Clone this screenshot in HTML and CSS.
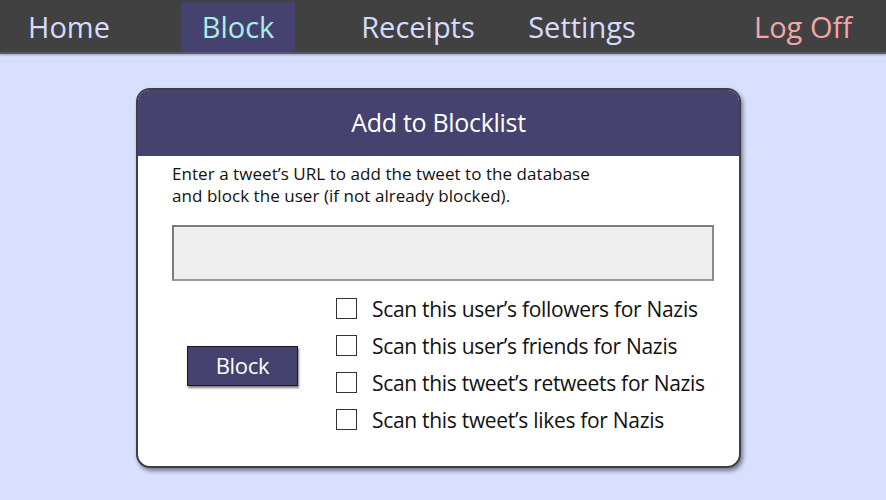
FILE: index.html
```html
<!DOCTYPE html>
<html>
<head>
<meta charset="utf-8">
<link rel="stylesheet" href="styles.css">
</head>
<body>
<nav class="nav">
  <a class="nav-link nav-home">Home</a>
  <a class="nav-link nav-block active">Block</a>
  <a class="nav-link nav-receipts">Receipts</a>
  <a class="nav-link nav-settings">Settings</a>
  <a class="nav-link nav-logoff">Log Off</a>
</nav>
<main class="main">
  <section class="card">
    <header class="card-head">Add to Blocklist</header>
    <div class="card-body">
      <p class="intro">Enter a tweet’s URL to add the tweet to the database<br>and block the user (if not already blocked).</p>
      <div class="url-input"></div>
      <div class="actions">
        <div class="btn-wrap"><button class="btn">Block</button></div>
        <ul class="checks">
          <li class="check"><span class="box"></span><span>Scan this user’s followers for Nazis</span></li>
          <li class="check"><span class="box"></span><span>Scan this user’s friends for Nazis</span></li>
          <li class="check"><span class="box"></span><span>Scan this tweet’s retweets for Nazis</span></li>
          <li class="check"><span class="box"></span><span>Scan this tweet’s likes for Nazis</span></li>
        </ul>
      </div>
    </div>
  </section>
</main>
</body>
</html>
```
FILE: styles.css
```css
* { box-sizing: border-box; }
html, body { margin: 0; padding: 0; }
body {
  width: 886px;
  height: 500px;
  overflow: hidden;
  background: #d9dffe;
  font-family: "Open Sans", "Noto Sans", sans-serif;
}
.nav {
  height: 54px;
  background: #414141;
  border-bottom: 2px solid #5a5a6a;
  box-shadow: 0 1px 2px rgba(0,0,0,0.3);
  display: flex;
  align-items: stretch;
  padding: 2px 26px 0 12px;
}
.nav-link {
  width: 114px;
  display: flex;
  align-items: center;
  justify-content: center;
  font-size: 29px;
  color: #d6dcff;
  padding-bottom: 2px;
  letter-spacing: 0;
  white-space: nowrap;
}
.nav-block { margin-left: 55px; }
.nav-receipts { margin-left: 66px; }
.nav-settings { margin-left: 50px; }
.nav-logoff { margin-left: auto; color: #f6a6a6; }
.active { background: #45426f; color: #a8efe2; }

.main { padding: 34px 0 0 136px; }
.card {
  width: 605px;
  height: 380px;
  background: #fff;
  border: 2px solid #3e3e44;
  border-radius: 14px;
  box-shadow: 2px 3px 4px rgba(0,0,0,0.45);
  overflow: hidden;
}
.card-head {
  height: 66px;
  background: #45426f;
  color: #fff;
  font-size: 25px;
  display: flex;
  align-items: center;
  justify-content: center;
  padding-bottom: 2px;
  letter-spacing: -0.3px;
}
.card-body { padding: 7px 25px 0 34px; }
.intro {
  margin: 0;
  font-size: 17px;
  line-height: 22px;
  color: #111;
  letter-spacing: 0.05px;
  white-space: nowrap;
}
.url-input {
  margin-top: 18px;
  height: 56px;
  background: #eeeeee;
  border: 2px solid #7b7b7b;
  border-bottom-color: #9a9a9a;
  border-right-color: #8a8a8a;
}
.actions {
  display: flex;
  margin-top: 12px;
}
.btn-wrap {
  width: 164px;
  display: flex;
  align-items: center;
  padding-left: 15px;
  padding-top: 4px;
}
.btn {
  width: 111px;
  height: 40px;
  background: #45426f;
  border: 1px solid #1a1a1a;
  box-shadow: 1px 2px 2px rgba(0,0,0,0.5);
  color: #fff;
  font-family: inherit;
  font-size: 22px;
  padding: 0 0 2px;
  letter-spacing: -0.3px;
}
.checks {
  list-style: none;
  margin: 0;
  padding: 0;
  display: flex;
  flex-direction: column;
  gap: 6px;
}
.check {
  display: flex;
  align-items: center;
  gap: 15px;
  height: 31px;
  font-size: 21px;
  color: #111;
  letter-spacing: -0.3px;
  white-space: nowrap;
}
.box {
  width: 21px;
  height: 21px;
  border: 1px solid #333;
  background: #fff;
  flex: none;
}
```
